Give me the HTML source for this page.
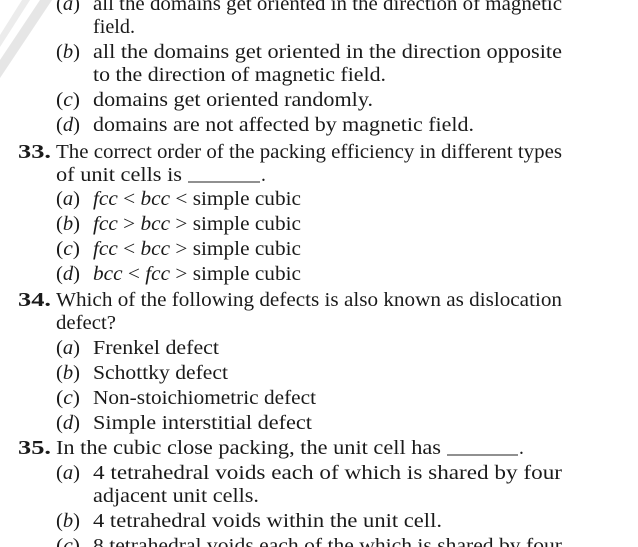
<!DOCTYPE html>
<html><head><meta charset="utf-8"><style>
html,body{margin:0;padding:0;background:#fff;width:638px;height:547px;overflow:hidden}
svg{display:block}
text{font-family:"Liberation Serif",serif;font-size:19.5px;fill:#1a1a1a}
.b{font-weight:bold}
.i{font-style:italic}
</style></head><body>
<svg width="638" height="547" viewBox="0 0 638 547">
<polygon points="0,60 40,0 52,0 0,78" fill="#e6e6e6"/>
<polygon points="0,35 22,0 30,0 0,47" fill="#ececec"/>
<g>
<text x="56" y="10" textLength="24" lengthAdjust="spacingAndGlyphs">(<tspan class="i">a</tspan>)</text>
<text x="93" y="10" textLength="469" lengthAdjust="spacingAndGlyphs">all the domains get oriented in the direction of magnetic</text>
<text x="93" y="33" textLength="42" lengthAdjust="spacingAndGlyphs">field.</text>
<text x="56" y="58" textLength="24" lengthAdjust="spacingAndGlyphs">(<tspan class="i">b</tspan>)</text>
<text x="93" y="58" textLength="469" lengthAdjust="spacingAndGlyphs">all the domains get oriented in the direction opposite</text>
<text x="93" y="81" textLength="293" lengthAdjust="spacingAndGlyphs">to the direction of magnetic field.</text>
<text x="56" y="106" textLength="24" lengthAdjust="spacingAndGlyphs">(<tspan class="i">c</tspan>)</text>
<text x="93" y="106" textLength="280" lengthAdjust="spacingAndGlyphs">domains get oriented randomly.</text>
<text x="56" y="131" textLength="24" lengthAdjust="spacingAndGlyphs">(<tspan class="i">d</tspan>)</text>
<text x="93" y="131" textLength="381" lengthAdjust="spacingAndGlyphs">domains are not affected by magnetic field.</text>

<text x="18" y="158" class="b" textLength="33" lengthAdjust="spacingAndGlyphs">33.</text>
<text x="56" y="158" textLength="506" lengthAdjust="spacingAndGlyphs">The correct order of the packing efficiency in different types</text>
<text x="56" y="181" textLength="126" lengthAdjust="spacingAndGlyphs">of unit cells is</text>
<line x1="188" y1="182" x2="260" y2="182" stroke="#222" stroke-width="1"/>
<text x="261" y="181">.</text>
<text x="56" y="205" textLength="24" lengthAdjust="spacingAndGlyphs">(<tspan class="i">a</tspan>)</text>
<text x="93" y="205" textLength="208" lengthAdjust="spacingAndGlyphs"><tspan class="i">fcc</tspan> &lt; <tspan class="i">bcc</tspan> &lt; simple cubic</text>
<text x="56" y="230" textLength="24" lengthAdjust="spacingAndGlyphs">(<tspan class="i">b</tspan>)</text>
<text x="93" y="230" textLength="208" lengthAdjust="spacingAndGlyphs"><tspan class="i">fcc</tspan> &gt; <tspan class="i">bcc</tspan> &gt; simple cubic</text>
<text x="56" y="255" textLength="24" lengthAdjust="spacingAndGlyphs">(<tspan class="i">c</tspan>)</text>
<text x="93" y="255" textLength="208" lengthAdjust="spacingAndGlyphs"><tspan class="i">fcc</tspan> &lt; <tspan class="i">bcc</tspan> &gt; simple cubic</text>
<text x="56" y="280" textLength="24" lengthAdjust="spacingAndGlyphs">(<tspan class="i">d</tspan>)</text>
<text x="93" y="280" textLength="208" lengthAdjust="spacingAndGlyphs"><tspan class="i">bcc</tspan> &lt; <tspan class="i">fcc</tspan> &gt; simple cubic</text>

<text x="18" y="306" class="b" textLength="33" lengthAdjust="spacingAndGlyphs">34.</text>
<text x="56" y="306" textLength="506" lengthAdjust="spacingAndGlyphs">Which of the following defects is also known as dislocation</text>
<text x="56" y="329" textLength="60" lengthAdjust="spacingAndGlyphs">defect?</text>
<text x="56" y="354" textLength="24" lengthAdjust="spacingAndGlyphs">(<tspan class="i">a</tspan>)</text>
<text x="93" y="354" textLength="126" lengthAdjust="spacingAndGlyphs">Frenkel defect</text>
<text x="56" y="379" textLength="24" lengthAdjust="spacingAndGlyphs">(<tspan class="i">b</tspan>)</text>
<text x="93" y="379" textLength="135" lengthAdjust="spacingAndGlyphs">Schottky defect</text>
<text x="56" y="404" textLength="24" lengthAdjust="spacingAndGlyphs">(<tspan class="i">c</tspan>)</text>
<text x="93" y="404" textLength="223" lengthAdjust="spacingAndGlyphs">Non-stoichiometric defect</text>
<text x="56" y="429" textLength="24" lengthAdjust="spacingAndGlyphs">(<tspan class="i">d</tspan>)</text>
<text x="93" y="429" textLength="219" lengthAdjust="spacingAndGlyphs">Simple interstitial defect</text>

<text x="18" y="454" class="b" textLength="33" lengthAdjust="spacingAndGlyphs">35.</text>
<text x="56" y="454" textLength="385" lengthAdjust="spacingAndGlyphs">In the cubic close packing, the unit cell has</text>
<line x1="447" y1="455" x2="518" y2="455" stroke="#222" stroke-width="1"/>
<text x="519" y="454">.</text>
<text x="56" y="479" textLength="24" lengthAdjust="spacingAndGlyphs">(<tspan class="i">a</tspan>)</text>
<text x="93" y="479" textLength="469" lengthAdjust="spacingAndGlyphs">4 tetrahedral voids each of which is shared by four</text>
<text x="93" y="502" textLength="166" lengthAdjust="spacingAndGlyphs">adjacent unit cells.</text>
<text x="56" y="527" textLength="24" lengthAdjust="spacingAndGlyphs">(<tspan class="i">b</tspan>)</text>
<text x="93" y="527" textLength="349" lengthAdjust="spacingAndGlyphs">4 tetrahedral voids within the unit cell.</text>
<text x="56" y="552" textLength="24" lengthAdjust="spacingAndGlyphs">(<tspan class="i">c</tspan>)</text>
<text x="93" y="552" textLength="469" lengthAdjust="spacingAndGlyphs">8 tetrahedral voids each of the which is shared by four</text>
</g>
</svg>
</body></html>
